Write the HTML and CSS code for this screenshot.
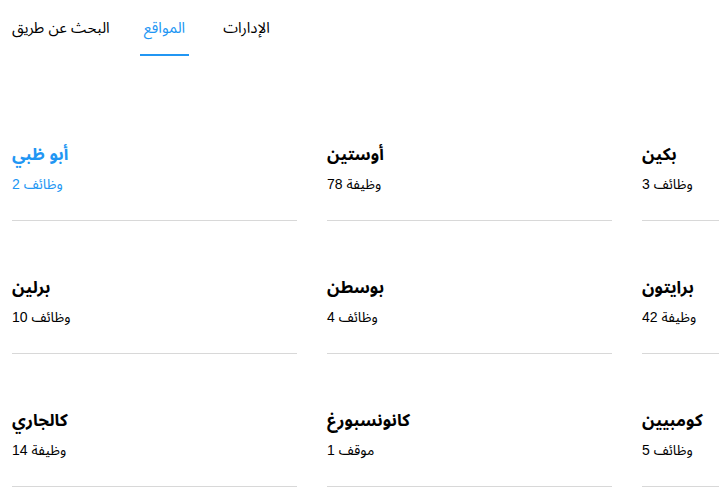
FILE: index.html
```html
<!DOCTYPE html>
<html lang="ar">
<head>
  <meta charset="UTF-8" />
  <meta name="viewport" content="width=device-width, initial-scale=1.0"/>
  <title>المواقع</title>
  <link rel="stylesheet" href="styles.css">
</head>
<body>

  <nav class="tabs">
    <span class="tab-label">البحث عن طريق</span>
    <a class="tab active" href="#">المواقع</a>
    <a class="tab" href="#">الإدارات</a>
  </nav>

  <div class="locations">
    <a class="location active" href="#">
      <h2>أبو ظبي</h2>
      <p>2 وظائف</p>
    </a>
    <a class="location" href="#">
      <h2>أوستين</h2>
      <p>78 وظيفة</p>
    </a>
    <a class="location" href="#">
      <h2>بكين</h2>
      <p>3 وظائف</p>
    </a>
    <a class="location" href="#">
      <h2>برلين</h2>
      <p>10 وظائف</p>
    </a>
    <a class="location" href="#">
      <h2>بوسطن</h2>
      <p>4 وظائف</p>
    </a>
    <a class="location" href="#">
      <h2>برايتون</h2>
      <p>42 وظيفة</p>
    </a>
    <a class="location" href="#">
      <h2>كالجاري</h2>
      <p>14 وظيفة</p>
    </a>
    <a class="location" href="#">
      <h2>كانونسبورغ</h2>
      <p>1 موقف</p>
    </a>
    <a class="location" href="#">
      <h2>كومبيين</h2>
      <p>5 وظائف</p>
    </a>
  </div>

</body>
</html>
```

FILE: styles.css
```css
/* Reset and Base */
* {
  box-sizing: border-box;
  margin: 0;
  padding: 0;
}

body {
  font-family: 'Liberation Sans', 'Noto Sans Arabic', 'DejaVu Sans', sans-serif;
  color: #000;
  background: #fff;
  padding: 0 12px;
  overflow: hidden;
}

a {
  color: inherit;
  text-decoration: none;
}

/* Tabs */
.tabs {
  display: flex;
  gap: 30px;
  font-size: 15px;
  line-height: 16px;
}

.tab-label,
.tab {
  padding: 20px 0 18px;
  border-bottom: 2px solid transparent;
}

.tab {
  padding-left: 4px;
  padding-right: 4px;
}

.tab.active {
  color: #2196f3;
  border-bottom-color: #2196f3;
}

/* Location grid */
.locations {
  display: grid;
  grid-template-columns: repeat(3, 285px);
  column-gap: 30px;
  margin-top: 87px;
  width: 915px;
}

.location {
  display: block;
  padding-bottom: 28px;
  border-bottom: 1px solid #d8d8d8;
  margin-bottom: 55px;
}

.location h2 {
  font-size: 17px;
  font-weight: bold;
  line-height: 24px;
}

.location p {
  font-size: 14px;
  line-height: 16px;
  margin-top: 9px;
}

.location.active {
  color: #2196f3;
}
```
